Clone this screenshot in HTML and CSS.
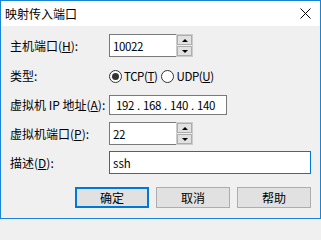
FILE: index.html
```html
<!DOCTYPE html>
<html lang="zh-CN">
<head>
<meta charset="utf-8">
<title>映射传入端口</title>
<link rel="stylesheet" href="styles.css">
</head>
<body>
<div class="win">
  <div class="titlebar">
    <span class="title">映射传入端口</span>
    <svg class="close" width="11" height="11" viewBox="0 0 11 11"><path d="M0.5 0.5 L10.5 10.5 M10.5 0.5 L0.5 10.5" stroke="#000" stroke-width="1" fill="none"/></svg>
  </div>
  <div class="content">
    <div class="row r1">
      <span class="label">主机端口(<u>H</u>):</span>
      <div class="spin">
        <div class="field num">10022</div>
        <div class="arrows"><div class="arrow"><i class="up"></i></div><div class="arrow"><i class="down"></i></div></div>
      </div>
    </div>
    <div class="row r2">
      <span class="label">类型:</span>
      <div class="radios">
        <span class="radio"><span class="circle on"><span class="dot"></span></span><span class="rtext">TCP(<u>T</u>)</span></span>
        <span class="radio"><span class="circle"></span><span class="rtext">UDP(<u>U</u>)</span></span>
      </div>
    </div>
    <div class="row r3">
      <span class="label">虚拟机 IP 地址(<u>A</u>):</span>
      <div class="ip">
        <span class="seg">192</span><span class="sep">.</span><span class="seg">168</span><span class="sep">.</span><span class="seg">140</span><span class="sep">.</span><span class="seg">140</span>
      </div>
    </div>
    <div class="row r4">
      <span class="label">虚拟机端口(<u>P</u>):</span>
      <div class="spin">
        <div class="field num">22</div>
        <div class="arrows"><div class="arrow"><i class="up"></i></div><div class="arrow"><i class="down"></i></div></div>
      </div>
    </div>
    <div class="row r5">
      <span class="label">描述(<u>D</u>):</span>
      <div class="field desc">ssh</div>
    </div>
    <div class="buttons">
      <div class="btn default">确定</div>
      <div class="btn">取消</div>
      <div class="btn">帮助</div>
    </div>
  </div>
</div>
</body>
</html>
```
FILE: styles.css
```css
* { box-sizing: border-box; }
html, body { margin: 0; padding: 0; }
body {
  width: 321px;
  height: 219px;
  overflow: hidden;
  font-family: "Noto Sans CJK SC", "Noto Sans", sans-serif;
  font-size: 12px;
  color: #000;
  background: #f0f0f0;
}
.win {
  width: 321px;
  height: 219px;
  border: 1px solid #1883d7;
  display: flex;
  flex-direction: column;
  background: #f0f0f0;
}
.titlebar {
  height: 25px;
  background: #fff;
  display: flex;
  align-items: center;
  padding-left: 4px;
  flex: none;
}
.title { font-size: 12px; line-height: 16px; }
.close { margin-left: auto; margin-right: 9px; display: block; }
.content {
  flex: 1;
  display: flex;
  flex-direction: column;
  padding: 8px 9px 0 9px;
}
.row { display: flex; align-items: center; }
.r1 { height: 23px; }
.r2 { height: 16px; margin-top: 11px; }
.r3 { height: 20px; margin-top: 11px; }
.r4 { height: 23px; margin-top: 7px; }
.r5 { height: 23px; margin-top: 6px; }
.label { width: 99px; flex: none; line-height: 16px; white-space: nowrap; }
u { text-decoration: underline; text-underline-offset: 1px; }
.spin { display: flex; height: 23px; }
.field {
  background: #fff;
  border: 1px solid #7a7a7a;
  height: 23px;
  display: flex;
  align-items: center;
  padding-left: 3px;
  line-height: 16px;
  font-size: 11.5px;
}
.num { width: 67px; border-right: none; letter-spacing: -0.4px; }
.arrows {
  width: 17px;
  height: 23px;
  border: 1px solid #cccccc;
  background: #f0f0f0;
  display: flex;
  flex-direction: column;
  gap: 1px;
  padding: 0;
}
.arrow {
  flex: 1;
  border: 1px solid #adadad;
  background: #e1e1e1;
  display: flex;
  align-items: center;
  justify-content: center;
}
.arrow i { display: block; width: 0; height: 0; border-left: 3px solid transparent; border-right: 3px solid transparent; }
.arrow i.up { border-bottom: 3px solid #000; }
.arrow i.down { border-top: 3px solid #000; }
.radios { display: flex; align-items: center; gap: 4px; }
.radio { display: flex; align-items: center; gap: 2px; }
.circle {
  width: 13px; height: 13px;
  border: 1px solid #333;
  border-radius: 50%;
  background: #fff;
  display: flex; align-items: center; justify-content: center;
}
.dot { width: 7px; height: 7px; border-radius: 50%; background: #333; }
.rtext { line-height: 16px; font-size: 11.5px; letter-spacing: -0.4px; }
.ip {
  width: 118px;
  height: 20px;
  background: #fff;
  border: 1px solid #7a7a7a;
  display: flex;
  align-items: center;
  padding-left: 6px;
  line-height: 16px;
  font-size: 11.5px;
  letter-spacing: -0.4px;
}
.seg { width: 18px; text-align: center; }
.sep { width: 9px; text-align: center; }
.desc { width: 202px; border-color: #0078d7; }
.buttons {
  display: flex;
  justify-content: flex-end;
  gap: 7px;
  margin-top: 13px;
}
.btn {
  width: 74px;
  height: 21px;
  border: 1px solid #adadad;
  background: #e1e1e1;
  display: flex;
  align-items: center;
  justify-content: center;
  line-height: 16px;
}
.btn.default { border: 2px solid #0078d7; }
```
